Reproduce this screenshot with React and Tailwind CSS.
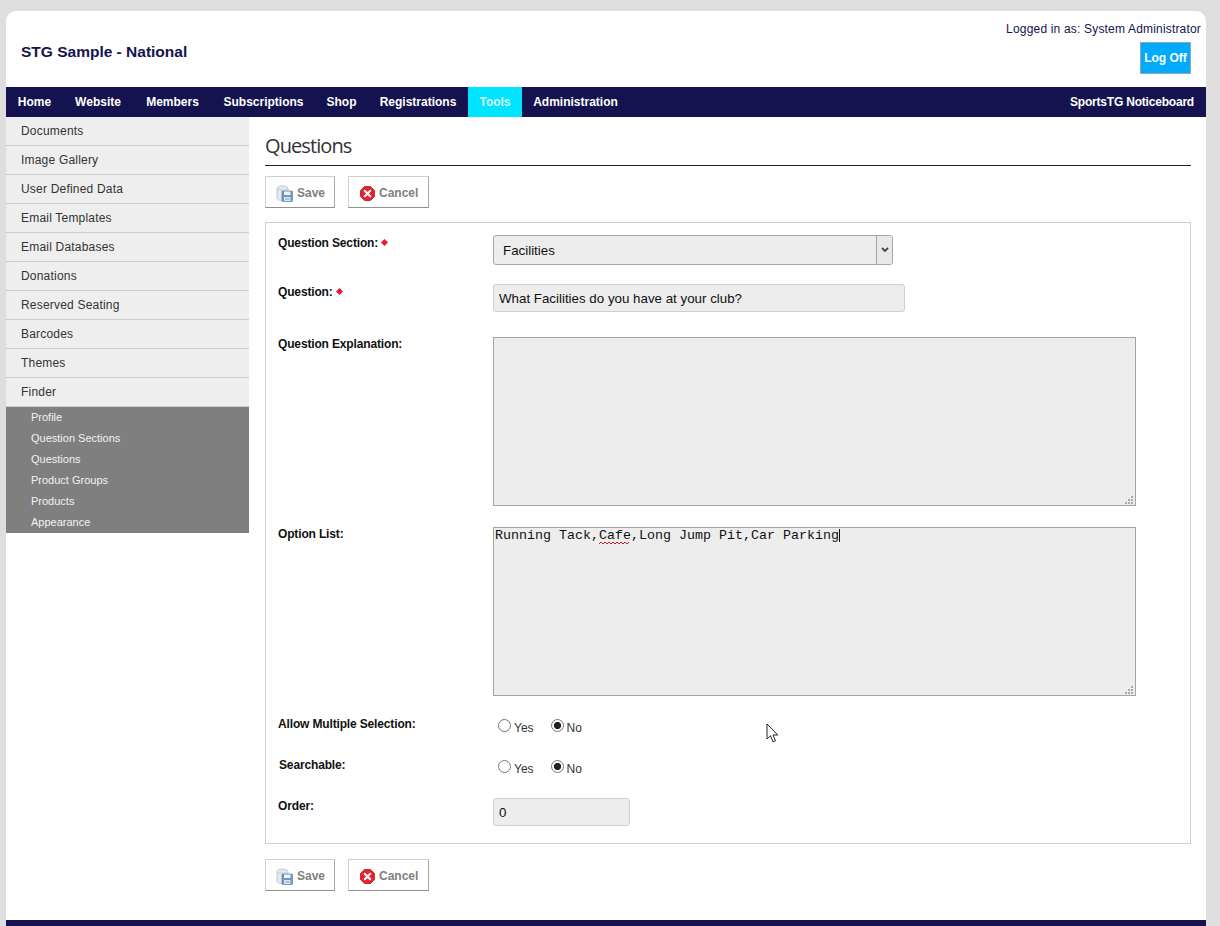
const navItems = [
  { label: "Home", width: "w-[57px]" },
  { label: "Website", width: "w-[70px]" },
  { label: "Members", width: "w-[79px]" },
  { label: "Subscriptions", width: "w-[103px]" },
  { label: "Shop", width: "w-[53px]" },
  { label: "Registrations", width: "w-[100px]" },
  { label: "Tools", width: "w-[54px]" },
  { label: "Administration", width: "w-[107px]" },
];
const sideItems = ["Documents", "Image Gallery", "User Defined Data", "Email Templates", "Email Databases", "Donations", "Reserved Seating", "Barcodes", "Themes", "Finder"];
const subItems = ["Profile", "Question Sections", "Questions", "Product Groups", "Products", "Appearance"];

function SaveIcon() {
  return (
    <svg viewBox="0 0 17 17" className="h-[17px] w-[17px] shrink-0">
      <path d="M1 3.5C1 2 4 1 6.5 1S12 2 12 3.5V13c0 1.500-2.500 2.500-5.500 2.500S1 14.500 1 13z" fill="#e6eaee" stroke="#b4bdc5" strokeWidth="0.8" />
      <path d="M1.500 4c1 1.500 9 1.500 10 0" fill="none" stroke="#bcc5cc" strokeWidth="0.8" />
      <rect x="6" y="6" width="10.500" height="10.500" rx="0.8" fill="#6d97c4" stroke="#4b76a6" strokeWidth="0.6" />
      <rect x="8" y="6.500" width="6.500" height="3.500" fill="#eef3f8" />
      <rect x="8" y="12" width="6.500" height="4" fill="#dde8f2" />
      <rect x="9" y="13.500" width="4.500" height="1" fill="#7ba0c6" />
    </svg>
  );
}

function CancelIcon() {
  return (
    <svg viewBox="0 0 15 15" className="h-[15px] w-[15px] shrink-0">
      <path d="M4.500 0.500h6l4 4v6l-4 4h-6l-4-4v-6z" fill="#e8212c" stroke="#c4141f" strokeWidth="0.8" strokeLinejoin="round" />
      <path d="M4.800 4.800l5.400 5.400M10.200 4.800l-5.400 5.400" stroke="#fff" strokeWidth="2.200" strokeLinecap="round" />
    </svg>
  );
}

function ToolButton({ icon, label, className }) {
  return (
    <button className={`flex h-[32px] items-center gap-[4px] border border-[#d0d0d0] border-r-[#a8a8a8] border-b-[#909090] bg-white pt-[2px] text-[12px] font-bold text-[#808080] ${className}`}>
      {icon}
      {label}
    </button>
  );
}

function ButtonRow({ className }) {
  return (
    <div className={`flex gap-[13px] ${className}`}>
      <ToolButton icon={<SaveIcon />} label="Save" className="w-[70px] pl-[10px]" />
      <ToolButton icon={<CancelIcon />} label="Cancel" className="w-[81px] pl-[11px]" />
    </div>
  );
}

function Required() {
  return <span className="ml-[4px] inline-block h-[5px] w-[5px] rotate-45 bg-[#e0202a] align-[2px]" />;
}

function Row({ label, required, labelClass = "", children, className = "" }) {
  return (
    <div className={`grid grid-cols-[215px_1fr] ${className}`}>
      <div className={`text-[12px] leading-[14px] font-bold tracking-[-0.15px] text-[#111] ${labelClass}`}>
        {label}
        {required && <Required />}
      </div>
      <div>{children}</div>
    </div>
  );
}

function Radio({ label, checked, name }) {
  return (
    <label className="flex items-start text-[12px] leading-[14px] text-[#333]">
      <input
        type="radio"
        name={name}
        defaultChecked={checked}
        className="mt-[-2px] mr-[3px] h-[13px] w-[13px] appearance-none rounded-full border border-[#767676] bg-white checked:bg-[radial-gradient(circle,#222_0,#222_3.2px,#fff_4px)]"
      />
      {label}
    </label>
  );
}

function RadioPair({ name }) {
  return (
    <div className="flex gap-[17px] pt-[5px] pl-[5px]">
      <Radio label="Yes" name={name} />
      <Radio label="No" name={name} checked />
    </div>
  );
}

function ResizeGrip() {
  return (
    <svg viewBox="0 0 8 8" className="absolute right-[3px] bottom-[2px] h-[8px] w-[8px]">
      <g fill="#a8a8a8">
        <rect x="6" y="0" width="2" height="2" />
        <rect x="3" y="3" width="2" height="2" />
        <rect x="6" y="3" width="2" height="2" />
        <rect x="0" y="6" width="2" height="2" />
        <rect x="3" y="6" width="2" height="2" />
        <rect x="6" y="6" width="2" height="2" />
      </g>
    </svg>
  );
}

export default function App() {
  return (
    <div className="relative h-[926px] overflow-hidden bg-[#dedede] pt-[11px] pl-[6px] font-['Liberation_Sans',Arial,sans-serif]">
      <div className="w-[1200px] rounded-t-[10px] bg-white">
        <header className="flex h-[76px] justify-between pr-[5px] pl-[15px]">
          <div className="pt-[32px] text-[15.500px] leading-[18px] font-bold text-[#14134f]">STG Sample - National</div>
          <div className="flex flex-col items-end pt-[11px]">
            <div className="text-[12px] leading-[14px] tracking-[0.18px] text-[#14134f]">Logged in as: System Administrator</div>
            <button className="mt-[6px] mr-[10px] h-[32px] w-[51px] border border-[#8fa9b8] bg-[#00aaff] text-[12px] font-bold text-white">Log Off</button>
          </div>
        </header>

        <nav className="flex h-[30px] items-center justify-between bg-[#14134f] text-[12px] font-bold text-white">
          <div className="flex h-full">
            {navItems.map((item) => (
              <a key={item.label} className={`flex h-full items-center justify-center ${item.width} ${item.label === "Tools" ? "bg-[#00e5ff] text-[#d8f4f8]" : ""}`}>
                {item.label}
              </a>
            ))}
          </div>
          <a className="pr-3 tracking-[-0.2px]">SportsTG Noticeboard</a>
        </nav>

        <div className="flex">
          <aside className="w-[243px] shrink-0">
            {sideItems.map((item) => (
              <div key={item} className="flex h-[29px] items-center border-b border-[#cccccc] bg-[#eeeeee] pb-px pl-[15px] text-[12px] tracking-[0.2px] text-[#333]">
                {item}
              </div>
            ))}
            <div className="bg-[#7f7f7f]">
              {subItems.map((item) => (
                <div key={item} className="flex h-[21px] items-center pl-[25px] text-[11px] text-[#f2f2f2]">
                  {item}
                </div>
              ))}
            </div>
          </aside>

          <main className="w-[942px] pt-[17px] pb-[29px] pl-[16px]">
            <h1 className="h-[32px] border-b border-[#222] font-['Open_Sans',sans-serif] text-[20px] leading-[23px] tracking-[-0.9px] text-[#333]">Questions</h1>
            <ButtonRow className="mt-[10px]" />

            <form className="mt-[14px] flex h-[622px] flex-col border border-[#cfcfcf] pt-[12px] pl-[12px]">
              <Row label="Question Section:" required labelClass="pt-px">
                <div className="relative w-[400px]">
                  <select className="block h-[30px] w-full appearance-none rounded-[3px] border border-[#a6a6a6] bg-[#ededed] pt-px pl-[9px] text-[13.330px] text-[#111]">
                    <option>Facilities</option>
                  </select>
                  <span className="absolute top-px right-px flex h-[28px] w-[16px] items-center justify-center rounded-r-[2px] border-l border-[#a6a6a6] bg-[#e8e8e8]">
                    <svg viewBox="0 0 8 6" className="h-[6px] w-[8px]">
                      <path d="M1 1l3 3 3-3" fill="none" stroke="#444" strokeWidth="1.800" />
                    </svg>
                  </span>
                </div>
              </Row>

              <Row label="Question:" required labelClass="pt-px" className="mt-[19px]">
                <input
                  defaultValue="What Facilities do you have at your club?"
                  className="block h-[28px] w-[412px] rounded-[3px] border border-[#cfcfcf] bg-[#ededed] pl-[5px] text-[13.330px] text-[#111]"
                />
              </Row>

              <Row label="Question Explanation:" className="mt-[25px]">
                <div className="relative w-[643px]">
                  <textarea className="block h-[169px] w-full resize-none border border-[#a3a3a3] bg-[#ededed]" />
                  <ResizeGrip />
                </div>
              </Row>

              <Row label="Option List:" className="mt-[21px]">
                <div className="relative w-[643px]">
                  <textarea
                    defaultValue="Running Tack,Cafe,Long Jump Pit,Car Parking"
                    className="block h-[169px] w-full resize-none border border-[#a3a3a3] bg-[#ededed] px-px pt-0 font-['Liberation_Mono',monospace] text-[13.330px] leading-[15px] text-[#111]"
                  />
                  <ResizeGrip />
                  {/* spell check squiggle and text caret */}
                  <svg className="absolute top-[14px] left-[106px] h-[4px] w-[32px]" viewBox="0 0 32 4">
                    <path d="M0 3l2-2 2 2 2-2 2 2 2-2 2 2 2-2 2 2 2-2 2 2 2-2 2 2 2-2 2 2 2-2" fill="none" stroke="#cc2027" strokeWidth="1" />
                  </svg>
                  <span className="absolute top-[2px] left-[346px] h-[13px] w-px bg-[#111]" />
                </div>
              </Row>

              <Row label="Allow Multiple Selection:" labelClass="pt-px" className="mt-[20px] h-[41px]">
                <RadioPair name="multiple" />
              </Row>

              <Row label="Searchable:" labelClass="pt-px pl-px" className="h-[41px]">
                <RadioPair name="searchable" />
              </Row>

              <Row label="Order:" labelClass="pt-px">
                <input defaultValue="0" className="block h-[28px] w-[137px] rounded-[3px] border border-[#cfcfcf] bg-[#ededed] pl-[5px] text-[13.330px] text-[#111]" />
              </Row>
            </form>

            <ButtonRow className="mt-[15px]" />
          </main>
        </div>

        <footer className="h-[60px] bg-[#14134f]" />
      </div>

      {/* mouse pointer caught in the screenshot */}
      <svg className="absolute top-[723px] left-[766px] h-[20px] w-[13px]" viewBox="0 0 13 20">
        <path d="M1 1v15l3.500-3.200 2.500 6 2.500-1-2.500-5.800h4.800z" fill="#fff" stroke="#222" strokeWidth="1" strokeLinejoin="round" />
      </svg>
    </div>
  );
}
